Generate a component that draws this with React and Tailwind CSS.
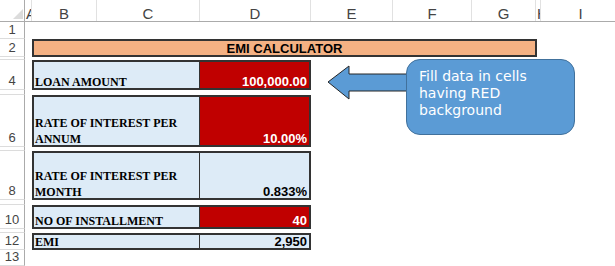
const cols = [
  { l: "A", w: "w-[7px] justify-start pl-[1px]" },
  { l: "B", w: "w-[65px] justify-center" },
  { l: "C", w: "w-[103px] justify-center" },
  { l: "D", w: "w-[111px] justify-center" },
  { l: "E", w: "w-[82px] justify-center" },
  { l: "F", w: "w-[79px] justify-center" },
  { l: "G", w: "w-[64px] justify-center" },
  { l: "H", w: "w-[5px] justify-start pl-[1px]" },
  { l: "I", w: "w-[80px] justify-center" },
];

const label = "font-['Liberation_Serif',serif] font-bold text-[12px] leading-4 text-black";
const value = "font-['Liberation_Sans',Arial,sans-serif] font-bold text-[13px] leading-[12px]";

function RowHead({ n, h }) {
  return (
    <div
      className={`${h} w-[25px] shrink-0 flex items-end justify-center overflow-hidden border-b border-r border-b-[#dcdcdc] border-r-[#ababab] text-[13px] leading-[15px] text-[#444]`}
    >
      <span className="pb-[1px]">{n}</span>
    </div>
  );
}

function Box({ name, val, red }) {
  return (
    <div className="ml-[7px] w-[279px] h-full flex border-2 border-[#333]">
      <div className={`w-[166px] bg-[#ddebf7] border-r border-[#333] flex items-end pl-[1px] ${label}`}>
        <span className="-mb-[2px]">{name}</span>
      </div>
      <div
        className={`flex-1 flex items-end justify-end pr-[2px] ${value} ${
          red ? "bg-[#c00000] text-white" : "bg-[#ddebf7] text-black"
        }`}
      >
        {val}
      </div>
    </div>
  );
}

const rows = [
  { n: 1, h: "h-[17px]" },
  { n: 2, h: "h-[18px]", title: true },
  { n: 3, h: "h-[3px]" },
  { n: 4, h: "h-[30px]", name: "LOAN AMOUNT", val: "100,000.00", red: true },
  { n: 5, h: "h-[5px]" },
  { n: 6, h: "h-[52px]", name: <>RATE OF INTEREST PER<br />ANNUM</>, val: "10.00%", red: true },
  { n: 7, h: "h-[4px]" },
  { n: 8, h: "h-[49px]", name: <>RATE OF INTEREST PER<br />MONTH</>, val: "0.833%" },
  { n: 9, h: "h-[5px]" },
  { n: 10, h: "h-[24px]", name: "NO OF INSTALLMENT", val: "40", red: true },
  { n: 11, h: "h-[4px]" },
  { n: 12, h: "h-[17px]", name: "EMI", val: "2,950" },
  { n: 13, h: "h-[16px]" },
];

export default function App() {
  return (
    <div className="relative w-[615px] h-[266px] overflow-hidden bg-white font-['Liberation_Sans',Arial,sans-serif]">
      <div className="flex h-[22px] border-b border-[#ababab]">
        <div className="w-[25px] shrink-0 border-r border-[#ababab] relative">
          <svg className="absolute left-0 top-0" width="25" height="22">
            <polygon points="23,9 23,19 13,19" fill="#dcdcdc" />
          </svg>
        </div>
        {cols.map((c) => (
          <div
            key={c.l}
            className={`${c.w} shrink-0 flex items-end overflow-hidden border-r border-[#e1e1e1] text-[15px] leading-[14px] text-[#444]`}
          >
            <span className="whitespace-nowrap">{c.l}</span>
          </div>
        ))}
      </div>

      {rows.map((r) => (
        <div key={r.n} className="flex">
          <RowHead n={r.n} h={r.h} />
          <div className={`${r.h} flex-1`}>
            {r.title && (
              <div className="ml-[7px] w-[505px] h-[18px] bg-[#f4b183] border-2 border-[#333] flex items-center justify-center font-bold text-[13px] leading-none text-black">
                EMI CALCULATOR
              </div>
            )}
            {r.name && <Box name={r.name} val={r.val} red={r.red} />}
          </div>
        </div>
      ))}

      <svg className="absolute left-0 top-0 pointer-events-none" width="615" height="266">
        <polygon
          points="328,82 349,66 349,74 412,74 412,91 349,91 349,99"
          fill="#5b9bd5"
          stroke="#262626"
          strokeWidth="1"
        />
      </svg>
      <div className="absolute left-[406px] top-[59px] w-[169px] h-[76px] rounded-[14px] bg-[#5b9bd5] border border-[#41719c] pl-[12px] pt-[8px] font-['DejaVu_Sans',sans-serif] text-[14px] leading-[17px] text-white">
        Fill data in cells
        <br />
        having RED
        <br />
        background
      </div>
    </div>
  );
}
